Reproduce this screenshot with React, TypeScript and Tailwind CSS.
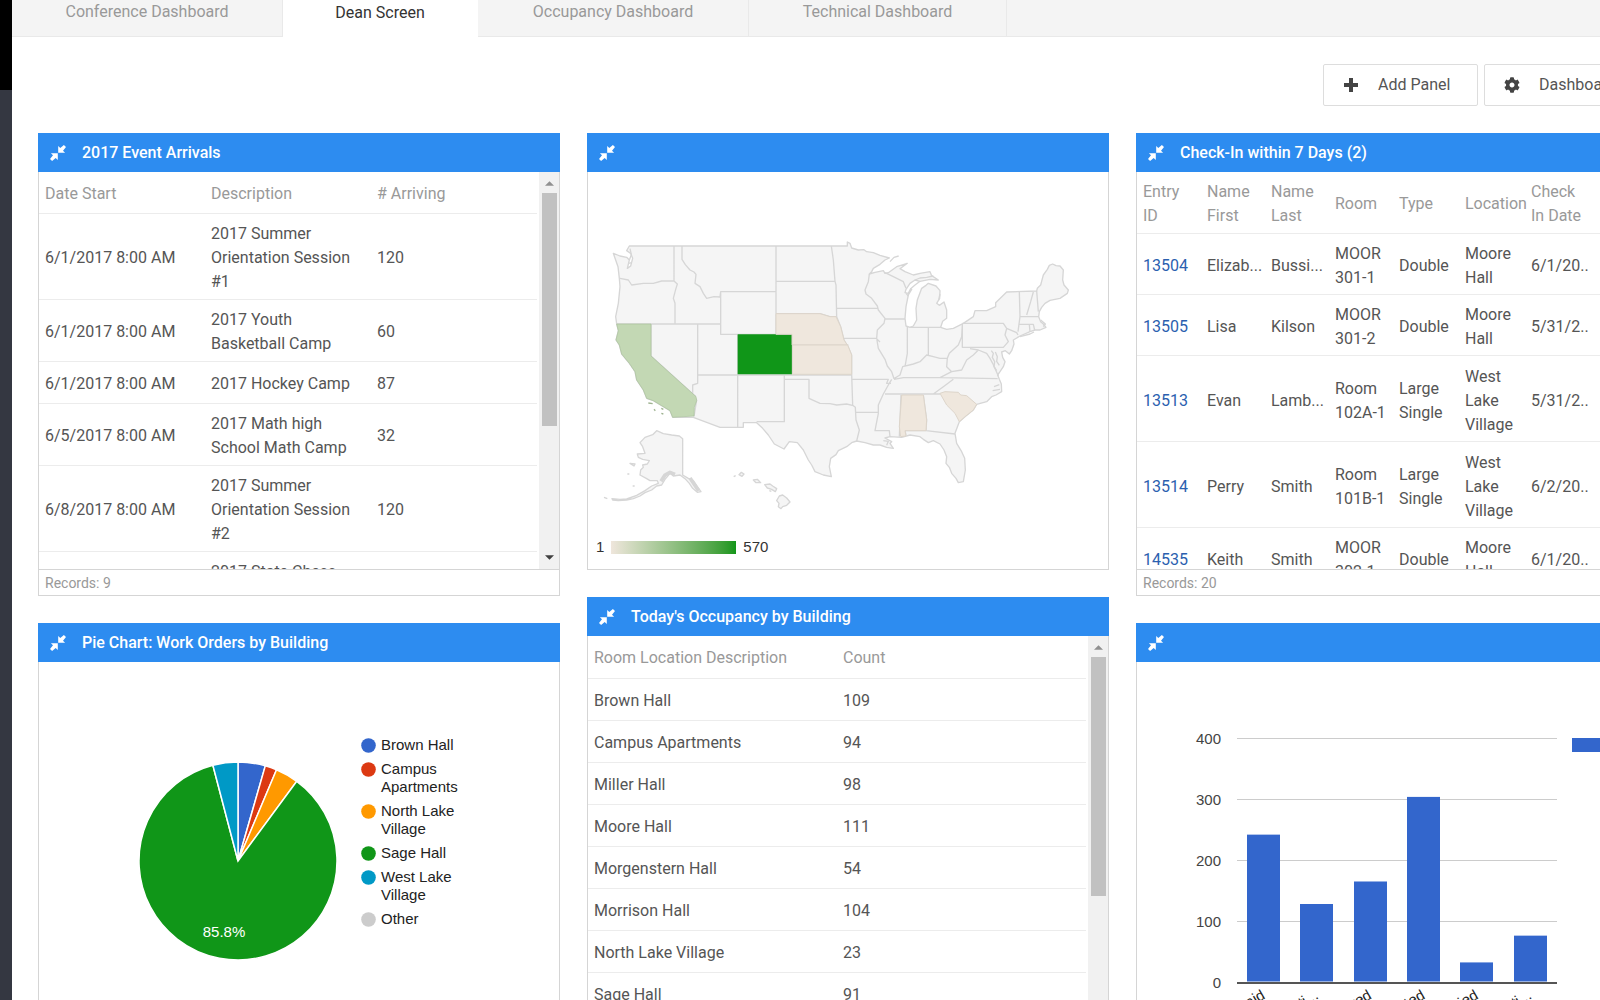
import type { ReactNode } from "react";
import { FaCog } from "react-icons/fa";

const tabs = [
  { label: "Conference Dashboard", width: "w-[271px]" },
  { label: "Dean Screen", width: "w-[195px]" },
  { label: "Occupancy Dashboard", width: "w-[271px]" },
  { label: "Technical Dashboard", width: "w-[258px]" },
];

const arrivals: { date: string; name: string; count: number }[] = [
  { date: "6/1/2017 8:00 AM", name: "2017 Summer Orientation Session #1", count: 120 },
  { date: "6/1/2017 8:00 AM", name: "2017 Youth Basketball Camp", count: 60 },
  { date: "6/1/2017 8:00 AM", name: "2017 Hockey Camp", count: 87 },
  { date: "6/5/2017 8:00 AM", name: "2017 Math high School Math Camp", count: 32 },
  { date: "6/8/2017 8:00 AM", name: "2017 Summer Orientation Session #2", count: 120 },
  { date: "6/9/2017 8:00 AM", name: "2017 State Chess Camp", count: 45 },
];

const occupancy: [string, number][] = [
  ["Brown Hall", 109],
  ["Campus Apartments", 94],
  ["Miller Hall", 98],
  ["Moore Hall", 111],
  ["Morgenstern Hall", 54],
  ["Morrison Hall", 104],
  ["North Lake Village", 23],
  ["Sage Hall", 91],
  ["West Lake Village", 40],
];

const checkins: string[][] = [
  ["13504", "Elizab...", "Bussi...", "MOOR 301-1", "Double", "Moore Hall", "6/1/20.."],
  ["13505", "Lisa", "Kilson", "MOOR 301-2", "Double", "Moore Hall", "5/31/2.."],
  ["13513", "Evan", "Lamb...", "Room 102A-1", "Large Single", "West Lake Village", "5/31/2.."],
  ["13514", "Perry", "Smith", "Room 101B-1", "Large Single", "West Lake Village", "6/2/20.."],
  ["14535", "Keith", "Smith", "MOOR 302-1", "Double", "Moore Hall", "6/1/20.."],
];

const slices = [
  { label: "Brown Hall", color: "#3366cc", from: 0, to: 16 },
  { label: "Campus Apartments", color: "#dc3912", from: 16, to: 22.9 },
  { label: "North Lake Village", color: "#ff9900", from: 22.9, to: 36.4 },
  { label: "Sage Hall", color: "#109618", from: 36.4, to: 345.3 },
  { label: "West Lake Village", color: "#0099c6", from: 345.3, to: 360 },
  { label: "Other", color: "#cccccc", from: 360, to: 360 },
];

const bars = [
  { label: "Initial Paid", value: 243 },
  { label: "Cancellati...", value: 129 },
  { label: "Approved", value: 166 },
  { label: "Wait Listed", value: 305 },
  { label: "Denied", value: 33 },
  { label: "Applicati...", value: 77 },
];

function CompressIcon() {
  return (
    <svg viewBox="0 0 16 16" className="size-4 shrink-0" fill="currentColor" aria-hidden="true">
      <path d="M8.2 0.9 10.3 3 13.9 0 16 2.1 13 5.7 15.1 7.8H8.2Z" />
      <path d="M7.8 15.1 5.7 13 2.1 16 0 13.9 3 10.3 0.9 8.2H7.8Z" />
    </svg>
  );
}

function PlusIcon() {
  return (
    <svg viewBox="0 0 16 16" className="size-4 shrink-0" fill="#444" aria-hidden="true">
      <path d="M6 1H10V6H15V10H10V15H6V10H1V6H6Z" />
    </svg>
  );
}

function Panel({ title, footer, bodyClass, children }: { title?: string; footer?: string; bodyClass: string; children: ReactNode }) {
  return (
    <section>
      <header className="flex h-[39px] items-center gap-4 bg-[#2d8cf0] pl-3 text-white">
        <button type="button" aria-label="Collapse panel">
          <CompressIcon />
        </button>
        <h2 className="text-base font-medium">{title}</h2>
      </header>
      <div className={`overflow-hidden border-x border-b border-[#d5d5d5] ${bodyClass}`}>{children}</div>
      {footer && (
        <div className="flex h-[26px] items-center border-x border-b border-[#d5d5d5] px-1.5 text-sm text-[#999]">{footer}</div>
      )}
    </section>
  );
}

function ScrollBar({ thumbClass }: { thumbClass: string }) {
  return (
    <div className="flex w-5 shrink-0 flex-col items-center justify-between bg-[#f1f1f1]">
      <svg viewBox="0 0 10 5" className="mt-[9px] h-[5px] w-[9px] shrink-0" aria-hidden="true">
        <path d="M0 5 5 0 10 5Z" fill="#909090" />
      </svg>
      <div className={`mt-[7px] w-[15px] shrink-0 bg-[#c1c1c1] ${thumbClass}`} />
      <div className="flex-1" />
      <svg viewBox="0 0 10 5" className="mb-[9px] h-[5px] w-[9px] shrink-0" aria-hidden="true">
        <path d="M0 0 5 5 10 0Z" fill="#404040" />
      </svg>
    </div>
  );
}

const rule = "border-b border-[#ececec]";
const cell = "px-1.5 pt-2 pb-[5px] text-left font-normal";

function ArrivalsTable() {
  return (
    <div className="flex h-full justify-between">
      <table className="w-[498px] table-fixed self-start text-base leading-6 text-[#555]">
        <thead>
          <tr className={`h-[41px] text-[#999] ${rule}`}>
            {["Date Start", "Description", "# Arriving"].map((h) => (
              <th key={h} className={cell}>{h}</th>
            ))}
          </tr>
        </thead>
        <tbody>
          {arrivals.map((a) => (
            <tr key={a.name} className={`h-[42px] ${rule}`}>
              <td className={cell}>{a.date}</td>
              <td className={cell}>{a.name}</td>
              <td className={cell}>{a.count}</td>
            </tr>
          ))}
        </tbody>
      </table>
      <ScrollBar thumbClass="h-[233px]" />
    </div>
  );
}

function OccupancyTable() {
  return (
    <div className="flex h-full justify-between">
      <table className="w-[498px] table-fixed self-start text-base leading-6 text-[#555]">
        <thead>
          <tr className={`h-[42px] text-[#999] ${rule}`}>
            <th className={cell}>Room Location Description</th>
            <th className={cell}>Count</th>
          </tr>
        </thead>
        <tbody>
          {occupancy.map(([name, count]) => (
            <tr key={name} className={`h-[42px] ${rule}`}>
              <td className={cell}>{name}</td>
              <td className={cell}>{count}</td>
            </tr>
          ))}
        </tbody>
      </table>
      <ScrollBar thumbClass="h-[239px]" />
    </div>
  );
}

function CheckInTable() {
  const heads = ["Entry ID", "Name First", "Name Last", "Room", "Type", "Location", "Check In Date"];
  return (
    <table className="w-[520px] table-fixed text-base leading-6 text-[#555]">
      <colgroup>
        <col className="w-16" />
        <col className="w-16" />
        <col className="w-16" />
        <col className="w-16" />
        <col className="w-[66px]" />
        <col className="w-[66px]" />
        <col className="w-16" />
        <col />
      </colgroup>
      <thead>
        <tr className={`h-[61px] text-[#999] ${rule}`}>
          {heads.map((h) => (
            <th key={h} className={cell}>{h}</th>
          ))}
          <th />
        </tr>
      </thead>
      <tbody>
        {checkins.map((r) => (
          <tr key={r[0]} className={`${r[5].startsWith("West") ? "h-[86px]" : "h-[61px]"} ${rule}`}>
            {r.map((v, i) => (
              <td key={i} className="pt-2 pb-1 pl-1.5">
                {i === 0 ? <a href="#entry" className="text-[#2b5faf]">{v}</a> : v}
              </td>
            ))}
            <td />
          </tr>
        ))}
      </tbody>
    </table>
  );
}

function UsMap() {
  return (
    <svg viewBox="0 0 1500 870" className="mt-12 ml-[2px] h-[290px] w-[500px]" role="img" aria-label="Map of the United States" strokeLinejoin="round">
      <g fill="#f5f5f5" stroke="#d6d6d6" strokeWidth="4">
        <path d="M118 78H772V66L780 70 785 84 805 90 822 89 830 95 850 98 870 106 898 114 885 120 870 133 850 145 845 155 838 162 855 157 880 152 885 160 895 158 920 140 952 130 930 146 945 155 970 165 990 160 1020 155 1025 167 1045 180 1020 178 990 184 975 180 960 190 948 208 945 218 955 220 962 206 965 208 955 225 948 260 945 295 948 318 960 322 970 318 980 300 978 265 982 240 995 205 1008 196 1015 190 1038 198 1050 212 1049 235 1040 250 1048 256 1062 246 1070 270 1070 295 1058 304 1052 322 1070 328 1090 325 1120 310 1150 290 1155 272 1190 272 1217 260 1217 248 1250 216 1340 213 1342 205 1352 195 1360 165 1372 148 1378 136 1388 132 1398 137 1410 138 1420 150 1418 180 1422 195 1435 210 1432 220 1410 235 1380 241 1365 250 1355 262 1348 275 1346 290 1352 305 1360 312 1368 322 1350 330 1335 330 1320 335 1290 348 1270 360 1272 372 1265 392 1258 402 1246 392 1235 396 1238 412 1245 425 1240 440 1230 455 1223 465 1228 478 1234 492 1235 515 1218 525 1205 530 1190 545 1160 553 1150 570 1125 590 1108 605 1095 640 1100 670 1115 695 1124 715 1126 750 1120 785 1105 788 1098 775 1085 760 1078 742 1068 730 1070 710 1062 690 1050 672 1030 662 1015 668 1000 658 990 650 960 645 935 652 900 650 885 654 905 665 900 670 910 685 890 682 870 675 850 675 825 668 800 663 785 668 770 680 745 692 738 704 722 715 718 740 724 770 700 765 675 755 665 735 655 720 640 690 622 668 598 665 582 687 553 672 535 645 518 625 500 608H460V622H390L310 592 248 592 240 572 215 557 190 542 170 535 160 510 140 480 135 455 118 430 95 402 88 375 78 360 85 332 80 312 77 290 85 250 90 200 88 175 84 140 70 100 90 108 110 112 118 120 112 145 122 138 128 115 122 100 110 92Z" />
        <g fill="none">
          <path d="M90 175 115 180 125 195 160 190 190 190 215 183H252M252 78V183L262 192 256 212 250 235 255 250V312M276 78V118L286 134 300 150 312 156 318 163 315 190 330 200 340 220 350 235 372 230 390 231 392 215H558M392 215V343H558M80 312H392M183 312V408L318 530M323 312V490L308 495V520L320 540 312 590M443 343V622M323 465H785M558 78V343M558 184H735M558 281H690L720 290 738 290M724 78 730 120 735 184 738 195 740 290 752 320 762 360 775 382 785 405V463L788 555M606 375H775M585 478H657V535L690 550 720 551 740 555 770 552 790 557 796 562 798 600 808 630 800 663M583 465V605H500" />
          <path d="M740 265H862M755 355H858L870 366M838 162 835 185 825 210 828 222 845 235 862 258 865 270 885 295 882 310 862 330 860 355 865 385 885 418 892 438 905 455 912 476M885 297H945M952 320V400L945 440M912 476 930 465 938 440 970 432 990 425 1010 405 1030 410 1050 415 1072 415 1078 400 1105 375 1115 350 1117 312M1015 322V405M960 322H1052M1117 312V382H1240L1255 365 1245 345 1250 325 1240 310H1117M1250 325 1280 338 1284 345M1072 415 1070 440 1085 455 1115 450 1130 420 1150 405 1165 390 1140 386M1085 455 1050 473M1165 390 1190 400 1200 415 1208 430 1225 468M912 478 940 473 1050 473 1223 476M885 522H1050M1030 522 1060 500 1090 478M905 478 895 495 880 522 865 555 865 580 855 632H898L900 650M795 577H865M785 478H895L890 490 903 490M933 525 928 650M1000 525 1010 600 1008 632 1095 642M945 632H1008M945 632 948 645M885 158 910 170 940 185 948 205M1288 216 1290 290 1284 335M1330 216 1322 245 1310 285M1340 213 1345 275M1288 290H1346M1288 313H1330L1334 330M1318 313 1320 335" />
          <path d="M1204 392 1210 400 1207 412 1214 425 1212 440 1220 452M1216 396 1222 410 1220 424 1228 436M1212 500 1228 494M1208 512 1230 508M1290 350 1320 342 1332 336M1352 300 1366 312 1360 320M962 206 975 195 990 184M948 220 955 228M1050 222 1046 240M975 180 990 174 1010 172 1030 168M118 120 124 104 120 86M115 130 126 128M890 676 895 664 880 662M900 125 912 112 926 108" />
        </g>
        <path d="M200 632 220 641 245 645 268 648 278 656V765L295 775 310 782 322 800 333 815 322 817 308 805 298 790 285 776 270 765 250 768 240 760 232 770 225 778 215 795 200 798 185 810 165 818 150 828 130 836 110 840 85 842 68 840 66 836 90 838 110 837 140 826 165 812 185 798 205 790 202 782 180 782 170 776 150 765 152 750 160 742 158 735 172 732 178 722 158 718 145 712 142 702 165 700 158 680 150 668 165 652 188 644Z" />
        <path d="M213 784 225 765 240 757 255 763M300 774 326 812" fill="none" strokeWidth="11" />
        <path d="M120 730 135 732 132 738ZM112 762H118M128 798H134M42 832 52 836" />
        <path d="M568 828 578 825 590 834 600 846 590 856 578 860 573 866 565 860 567 850 560 842Z" />
        <path d="M447 764 454 757 462 762 456 769ZM431 770 437 767M490 780 502 778 512 788 498 788ZM524 794 540 792 548 798 560 806 556 815 545 808 532 804ZM538 812 544 814" />
      </g>
      <path d="M80 312H183V408L318 530 320 542 313 562 312 588 248 592 240 572 215 557 190 542 170 535 160 510 140 480 135 455 118 430 95 402 88 375 78 360 85 332Z" fill="#c3d8b4" stroke="#a9c19b" strokeWidth="2" />
      <path d="M175 549 188 551M192 568 196 572M214 565 220 568M214 580 220 582" stroke="#9fb391" strokeWidth="4" />
      <path d="M443 343H606V463H443Z" fill="#109618" />
      <g fill="#efe7dd" stroke="#ddd5ca" strokeWidth="3">
        <path d="M558 281H690L720 290H738L752 320 762 360 772 375H606V343H558Z" />
        <path d="M607 375H773L785 405V463H607Z" />
        <path d="M935 525H1000L1010 600 1008 632H945L948 648 932 650 928 620Z" />
        <path d="M1050 520 1065 515 1105 517 1112 525 1130 527 1160 553 1150 570 1125 590 1108 605 1095 580 1070 555Z" />
      </g>
    </svg>
  );
}

function MapPanelBody() {
  return (
    <div className="flex h-full flex-col">
      <UsMap />
      <div className="mt-[30px] ml-2 flex items-center gap-[7px] font-['Liberation_Sans',sans-serif] text-[15px] leading-[14px] text-[#333]">
        <span>1</span>
        <div className="h-[13px] w-[125px] bg-linear-to-r from-[#efe6dc] to-[#109618]" />
        <span>570</span>
      </div>
    </div>
  );
}

function slicePath(from: number, to: number) {
  const point = (deg: number) => {
    const a = (deg * Math.PI) / 180;
    return `${100 + 99 * Math.sin(a)} ${100 - 99 * Math.cos(a)}`;
  };
  return `M100 100L${point(from)}A99 99 0 ${to - from > 180 ? 1 : 0} 1 ${point(to)}Z`;
}

function PieChart() {
  return (
    <div className="flex pl-[99px] pt-[74px] font-['Liberation_Sans',sans-serif] text-[15px] leading-[18px] text-[#222]">
      <svg viewBox="0 0 200 200" className="mt-[25px] size-[200px] shrink-0" role="img" aria-label="Work orders by building">
        {slices.slice(0, 5).map((s) => (
          <path key={s.label} d={slicePath(s.from, s.to)} fill={s.color} stroke="#fff" strokeWidth="1.5" />
        ))}
        <text x="86" y="176" fill="#fff" fontSize="15" textAnchor="middle">85.8%</text>
      </svg>
      <ul className="ml-[23px] flex w-[104px] flex-col gap-1.5">
        {slices.map((s) => (
          <li key={s.label} className="flex items-start gap-[5px]">
            <svg viewBox="0 0 15 15" className="mt-[2px] size-[15px] shrink-0" aria-hidden="true">
              <circle cx="7.5" cy="7.5" r="7.3" fill={s.color} />
            </svg>
            <span>{s.label}</span>
          </li>
        ))}
      </ul>
    </div>
  );
}

function BarChart() {
  const y = (v: number) => 320.5 - v * 0.6085;
  return (
    <svg viewBox="0 0 520 420" className="h-[420px] w-[520px]" role="img" aria-label="Bar chart" fontFamily="'Liberation Sans', sans-serif" fontSize="15">
      {[400, 300, 200, 100, 0].map((v) => (
        <g key={v}>
          <rect x="100" y={Math.round(y(v)) - 1} width="320" height={v ? 1 : 2} fill={v ? "#ccc" : "#555"} />
          <text x="84" y={Math.round(y(v)) + 5} textAnchor="end" fill="#444">{v}</text>
        </g>
      ))}
      {bars.map((b, i) => (
        <g key={b.label}>
          <rect x={110 + Math.round(i * 53.3)} y={y(b.value)} width="33" height={b.value * 0.6085 - 1} fill="#3366cc" />
          <text x={129 + i * 53.3} y="336" textAnchor="end" fill="#222" transform={`rotate(-30 ${129 + i * 53.3} 336)`}>{b.label}</text>
        </g>
      ))}
      <rect x="435" y="76" width="29" height="14" fill="#3366cc" />
    </svg>
  );
}

const button = "flex h-[42px] items-center gap-[19px] rounded-xs border border-[#ddd] bg-white px-[19px] text-base text-[#555]";

export default function App() {
  return (
    <div className="flex h-screen overflow-hidden bg-white font-[Roboto,sans-serif]">
      <aside className="flex w-3 shrink-0 flex-col">
        <div className="h-[90px] bg-black" />
        <div className="flex-1 bg-[#343741]" />
      </aside>
      <div className="min-w-0 flex-1 overflow-hidden">
        <nav className="flex h-[37px] bg-[#f4f4f4]">
          {tabs.map((t, i) => (
            <a
              key={t.label}
              href="#tab"
              className={`flex items-center justify-center border-r pb-3 text-base ${t.width} ${
                i === 1 ? "border-white bg-white text-[#333]" : "border-b border-[#e9e9e9] text-[#999]"
              }`}
            >
              {t.label}
            </a>
          ))}
          <div className="flex-1 border-b border-[#e9e9e9]" />
        </nav>
        <main className="w-[calc(100%+84px)] px-[26px] pt-[27px]">
          <div className="flex justify-end gap-1.5">
            <button type="button" className={`${button} w-[155px]`}>
              <PlusIcon />
              Add Panel
            </button>
            <button type="button" className={`${button} w-[174px]`}>
              <FaCog className="size-4 text-[#444]" />
              Dashboard
            </button>
          </div>
          <div className="mt-[27px] grid grid-cols-3 items-start gap-[27px]">
            <div className="flex flex-col gap-[27px]">
              <Panel title="2017 Event Arrivals" footer="Records: 9" bodyClass="h-[398px]">
                <ArrivalsTable />
              </Panel>
              <Panel title="Pie Chart: Work Orders by Building" bodyClass="h-[420px]">
                <PieChart />
              </Panel>
            </div>
            <div className="flex flex-col gap-[27px]">
              <Panel bodyClass="h-[398px]">
                <MapPanelBody />
              </Panel>
              <Panel title="Today's Occupancy by Building" bodyClass="h-[398px]">
                <OccupancyTable />
              </Panel>
            </div>
            <div className="flex flex-col gap-[27px]">
              <Panel title="Check-In within 7 Days (2)" footer="Records: 20" bodyClass="h-[398px]">
                <CheckInTable />
              </Panel>
              <Panel bodyClass="h-[420px]">
                <BarChart />
              </Panel>
            </div>
          </div>
        </main>
      </div>
    </div>
  );
}
